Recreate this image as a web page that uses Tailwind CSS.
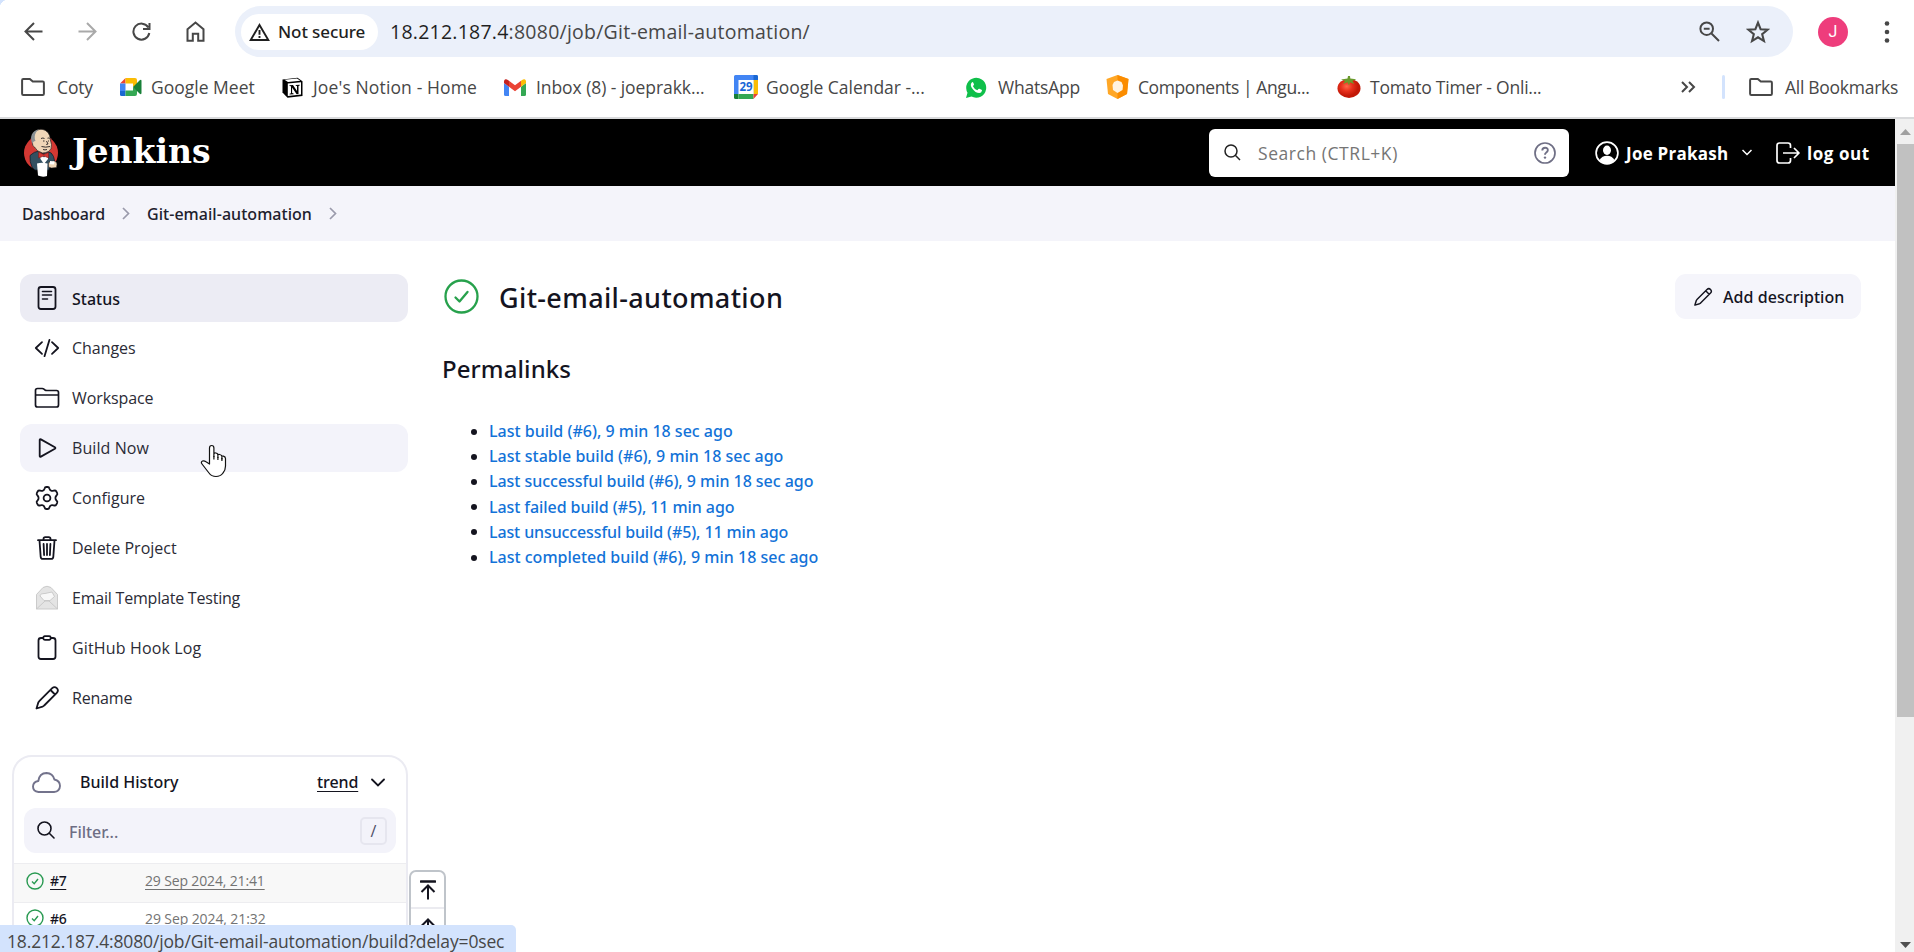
<!DOCTYPE html>
<html lang="en">
<head>
<meta charset="utf-8">
<title>Git-email-automation [Jenkins]</title>
<script src="https://cdn.jsdelivr.net/npm/@tailwindcss/browser@4"></script>
</head>
<body class="relative flex h-[952px] w-[1914px] flex-col overflow-hidden bg-white font-['Open_Sans','Noto_Sans',sans-serif] text-[#14141f] whitespace-nowrap">

<!-- Browser toolbar -->
<div class="flex h-[63px] shrink-0 items-center bg-[radial-gradient(circle_at_8px_8px,#fff_8px,#d3e3fd_8.5px)] bg-[length:8px_8px] bg-no-repeat">
  <div class="flex w-[235px] items-center gap-[35px] pl-[24px]">
    <svg class="size-[19px]" viewBox="0 0 19 19" fill="none" stroke="#474747" stroke-width="2"><path d="M18.500 9.500H1.500M10 1L1.500 9.500 10 18"/></svg>
    <svg class="size-[19px]" viewBox="0 0 19 19" fill="none" stroke="#a9a9a9" stroke-width="2"><path d="M.5 9.500h17M9 1l8.500 8.500L9 18"/></svg>
    <svg class="size-[19px]" viewBox="0 0 19 19" fill="none" stroke="#474747" stroke-width="2"><path d="M16.300 5.500A8 8 0 1 0 17.300 11M17.500 1v6h-6.500"/></svg>
    <svg class="-mt-px h-[21px] w-[19px]" viewBox="0 0 19 21" fill="none" stroke="#474747" stroke-width="2"><path d="M1.500 8.200L9.500 1.600l8 6.600v11.600h-5.300v-7H6.800v7H1.500z"/></svg>
  </div>
  <div class="flex h-[51px] w-[1558px] items-center rounded-full bg-[#ebf0fa] pl-[6px]">
    <div class="flex h-[36px] w-[137px] items-center rounded-full bg-white pl-[8px]">
      <svg class="h-[18px] w-[21px]" viewBox="0 0 21 18" fill="none" stroke="#1f1f1f" stroke-width="1.900"><path d="M10.500 2L19.300 17H1.700z"/><path d="M10.500 7v4.800M10.500 13v2"/></svg>
      <span class="ml-[8px] font-['Noto_Sans'] text-[17px] font-medium tracking-[-0.1px] text-[#1f1f1f]">Not secure</span>
    </div>
    <span class="ml-[12px] w-[1309px] text-[19.500px] tracking-[0.24px] text-[#474747]"><span class="text-[#1f1f1f]">18.212.187.4</span>:8080/job/Git-email-automation/</span>
    <svg class="h-[21px] w-[21px]" viewBox="0 0 21 21" fill="none" stroke="#474747" stroke-width="2"><circle cx="7.700" cy="7.700" r="6.300"/><path d="M12.500 12.500l7.500 7.500M4.800 7.700h5.800"/></svg>
    <svg class="ml-[26px] size-[24px]" viewBox="0 0 23 23" fill="none" stroke="#474747" stroke-width="2"><path d="M11.500 2.500l2.500 6.300 6.700.5-5.200 4.300 1.700 6.600-5.700-3.600-5.700 3.600 1.700-6.600-5.200-4.300 6.700-.5z"/></svg>
  </div>
  <div class="ml-[25px] flex size-[30px] items-center justify-center rounded-full bg-[#ee3d7c] font-['Roboto'] text-[16px] text-white">J</div>
  <svg class="ml-[36px] h-[22px] w-[6px]" viewBox="0 0 6 22" fill="#474747"><circle cx="3" cy="2.500" r="2.300"/><circle cx="3" cy="11" r="2.300"/><circle cx="3" cy="19.500" r="2.300"/></svg>
</div>

<!-- Bookmarks bar -->
<div class="flex h-[56px] shrink-0 items-start border-b-2 border-[#d9dadc] text-[17.500px] text-[#474747]">
  <div class="flex h-[48px] w-full items-center">
    <div class="flex w-[120px] items-center gap-[12px] pl-[21px]">
      <svg class="h-[18px] w-[24px]" viewBox="0 0 24 18" fill="none" stroke="#474747" stroke-width="2"><path d="M1.100 2.200q0-1.200 1.200-1.200h6.500l3 2.600h9.900q1.200 0 1.200 1.200v11q0 1.200-1.200 1.200H2.300q-1.200 0-1.200-1.200z"/></svg>
      <span class="tracking-[-0.14px]">Coty</span>
    </div>
    <div class="flex w-[162px] items-center gap-[9px]">
      <svg class="h-[18px] w-[22px]" viewBox="0 0 22 18"><path fill="#ea4335" d="M0 5.500L5.500 0v5.500z"/><path fill="#fbbc04" d="M5.500 0H15q2 0 2 2v5l-4 2V5.500H5.500z"/><path fill="#4285f4" d="M0 5.500h5.500v7.500H0z"/><path fill="#1967d2" d="M0 13h5.500v5H1.500Q0 18 0 16.500z"/><path fill="#34a853" d="M5.500 12.500H13V9l4 2.500V16q0 2-2 2H5.500z"/><path fill="#188038" d="M13 9l6.500-6.500Q21.500 1 21.500 3v12q0 2-2 .5z"/></svg>
      <span>Google Meet</span>
    </div>
    <div class="flex w-[222px] items-center gap-[10px]">
      <svg class="h-[21px] w-[21px]" viewBox="0 0 21 21"><path fill="#000" d="M.5 2.500L15.500.8l5 3.500V19L5.500 20.800.5 15.500z"/><path fill="#fff" d="M2.500 2.800l12.500-1.300 3.300 2.300L6 5zM5.800 6.500l13.200-1.200v12.300L5.800 19z"/><path fill="#000" d="M7.500 8.200l3.500-.2 4 6v-5l-1.300-.3V8l4-.3v.9l-1.200.3v8.200l-1.900.2-4.500-6.700v5.500l1.500.3v.8l-4 .3v-.8l1.400-.5V9.300L7.500 9z"/></svg>
      <span class="tracking-[0.13px]">Joe's Notion - Home</span>
    </div>
    <div class="flex w-[230px] items-center gap-[10px]">
      <svg class="h-[17px] w-[22px]" viewBox="0 0 22 17"><path fill="#4285f4" d="M0 4l5 3.700V17H1.500Q0 17 0 15.500z"/><path fill="#34a853" d="M22 4l-5 3.700V17h3.500q1.500 0 1.500-1.500z"/><path fill="#c5221f" d="M0 2.500Q0 .5 1.500.2 3-.2 5 1.700v6L0 4z"/><path fill="#fbbc04" d="M22 2.500q0-2-1.500-2.300Q19-.2 17 1.700v6L22 4z"/><path fill="#ea4335" d="M5 1.700l6 4.600 6-4.600v6l-6 4.600-6-4.600z"/></svg>
      <span class="tracking-[-0.07px]">Inbox (8) - joeprakk...</span>
    </div>
    <div class="flex w-[232px] items-center gap-[8px]">
      <svg class="h-[24px] w-[24px]" viewBox="0 0 24 24"><path fill="#4285f4" d="M0 1.500Q0 0 1.500 0h21Q24 0 24 1.500V5H19.500v14H0z"/><path fill="#1967d2" d="M19.500 0h3Q24 0 24 1.500V5h-4.500z"/><path fill="#fbbc04" d="M19.500 5H24v14h-4.500z"/><path fill="#188038" d="M0 19h4.500v5h-3Q0 24 0 22.500z"/><path fill="#34a853" d="M4.500 19h15v5h-15z"/><path fill="#ea4335" d="M19.500 19H24l-4.500 5z"/><path fill="#fff" d="M4.500 5h15v14h-15z"/><text x="12" y="16.200" text-anchor="middle" font-family="Open Sans" font-weight="700" font-size="11.500" fill="#1a66d6">29</text></svg>
      <span class="tracking-[-0.03px]">Google Calendar -...</span>
    </div>
    <div class="flex w-[140px] items-center gap-[11px]">
      <svg class="size-[21px]" viewBox="0 0 21 21"><path fill="#0fbf4a" d="M0 21l1.500-5.300A10 10 0 1 1 5.500 19.600z"/><path fill="#fff" d="M7 5.200q-.7-.3-1.400.5-1.800 2.300.5 5.500 3.300 4.800 7.200 4.900 2.200-.2 2.700-2.700 0-.5-.5-.7l-2.100-1q-.6-.2-1 .3l-.8 1q-.3.300-.8 0-2.600-1.200-3.700-3.500-.1-.4.1-.7.900-.9.800-1.500z"/></svg>
      <span class="tracking-[-0.21px]">WhatsApp</span>
    </div>
    <div class="flex w-[231px] items-center gap-[9px]">
      <svg class="h-[24px] w-[23px]" viewBox="0 0 23 24"><path fill="#ffa726" d="M11.500 0L22.500 4 21 19l-9.500 5L2 19 .5 4z"/><path fill="#fb8c00" d="M11.500 0L22.500 4 21 19l-9.500 5z"/><path fill="#fff3e0" d="M11.500 5.500l4 1.500 1.500 3.500-.5 4.500-5 3-4.500-3L6.500 10 8 7z"/></svg>
      <span class="tracking-[-0.4px]">Components | Angu...</span>
    </div>
    <div class="flex w-[344px] items-center gap-[9px]">
      <svg class="h-[22px] w-[24px]" viewBox="0 0 24 22"><defs><radialGradient id="tom" cx=".4" cy=".4"><stop offset="0" stop-color="#ff6a4a"/><stop offset=".5" stop-color="#e8301c"/><stop offset="1" stop-color="#c21807"/></radialGradient></defs><ellipse cx="12" cy="12.300" rx="11.500" ry="9.600" fill="url(#tom)"/><path fill="#6a9a2d" d="M11 0h2l.3 2.500 6 .8-4 1.700 2 3-4.300-1.700L12 9.500l-1.500-3.200L6 8l2-3-4-1.500 6.500-1z"/></svg>
      <span class="tracking-[-0.22px]">Tomato Timer - Onli...</span>
    </div>
    <svg class="h-[12px] w-[15px]" viewBox="0 0 15 12" fill="none" stroke="#474747" stroke-width="2"><path d="M1 1l5 5-5 5M8 1l5 5-5 5"/></svg>
    <div class="ml-[26px] h-[24px] w-[3px] rounded bg-[#d3e3fd]"></div>
    <svg class="ml-[24px] h-[18px] w-[24px]" viewBox="0 0 24 18" fill="none" stroke="#474747" stroke-width="2"><path d="M1.100 2.200q0-1.200 1.200-1.200h6.500l3 2.600h9.900q1.200 0 1.200 1.200v11q0 1.200-1.200 1.200H2.300q-1.200 0-1.200-1.200z"/></svg>
    <span class="ml-[12px] tracking-[-0.28px]">All Bookmarks</span>
  </div>
</div>

<!-- Page viewport -->
<div class="flex min-h-0 flex-1">
  <div class="flex w-[1895px] flex-col">
    <header class="flex h-[67px] shrink-0 items-center bg-black text-white">
      <svg class="ml-[23px] h-[49px] w-[36px]" viewBox="0 0 36 49">
        <ellipse cx="18" cy="25" rx="17" ry="17.500" fill="#d33833"/>
        <path fill="#335061" stroke="#0b1b25" stroke-width=".7" d="M7 27.500q4-4 9-4.500l4 3 4-2.500q5 .5 6.500 5l1.500 6-5 2.500-1 5H12l-3-3q-2.500-5-2-11.500z"/>
        <path fill="#f0d6b7" stroke="#231f20" stroke-width=".7" d="M9.500 15Q8 5 14 2.200 20-.5 25 4.500q2 2.500 2.300 7l1.200 5q.5 5-3 7-3 1.500-6 1.500-6-1.500-8-6-2.500-1-2-4z"/>
        <path fill="#8a9094" d="M9.500 16Q7 11 8.800 6.500 11 2 16 1.200q-4 3-4.300 7.300-.2 2 .8 4.500-2.500 0-3 3z"/>
        <path fill="none" stroke="#231f20" stroke-width=".9" d="M18 10.500q2-1 3.500 0M24.500 10.200q1.500-.5 2 .3M20 13h1.500M25 13h1M23.500 13l1.500 3-1.800.5M18.500 18.500q4 1.300 8.500 0M20 21.500q2 .8 4 0"/>
        <path fill="#fff" d="M16.500 24.500l4.500 5 4-4.500v6l-4 5-3.500-5z"/>
        <path fill="#d33833" stroke="#7a1512" stroke-width=".5" d="M15.500 24l5 2.500 5-2v5.500l-4.500-2-5.500 2z"/>
        <path fill="#fff" d="M14 35.500q5-1.500 10.500 0l-.5 12.500q-4.500 1.500-9-.5z"/>
        <path fill="#f0d6b7" stroke="#231f20" stroke-width=".5" d="M25.500 34.500l5-1.500q3 0 3.500 3l-.5 3.500-5 .5-3-1z"/>
        <path fill="#fff" d="M27 33l4.500.5-.5 3-4-.3z"/>
      </svg>
      <span class="-mt-[2px] ml-[13px] w-[1137px] font-['DejaVu_Serif'] text-[33px] leading-none font-bold">Jenkins</span>
      <div class="flex h-[48px] w-[360px] items-center rounded-[6px] bg-white pl-[15px]">
        <svg class="size-[17px]" viewBox="0 0 17 17" fill="none" stroke="#222" stroke-width="1.500"><circle cx="7" cy="7" r="6"/><path d="M11.300 11.300L16 16"/></svg>
        <span class="mt-[2px] ml-[17px] w-[276px] text-[17.500px] tracking-[0.55px] text-[#757575]">Search (CTRL+K)</span>
        <svg class="size-[22px]" viewBox="0 0 22 22" fill="none" stroke="#6f6f85" stroke-width="1.700"><circle cx="11" cy="11" r="10"/><path d="M8.300 8.600q0-2.800 2.800-2.800t2.700 2.500q0 1.500-1.700 2.400-1.100.7-1.100 2.100" stroke-width="1.900"/><circle cx="11" cy="15.600" r="1.200" fill="#6f6f85" stroke="none"/></svg>
      </div>
      <svg class="ml-[26px] size-[24px]" viewBox="0 0 24 24"><circle cx="12" cy="12" r="10.900" fill="none" stroke="#fff" stroke-width="1.700"/><ellipse cx="12" cy="9.200" rx="4" ry="4.700" fill="#fff"/><path fill="#fff" d="M4.500 19q2.500-4.300 7.500-4.300t7.500 4.300Q16 23 12 23t-7.500-4z"/></svg>
      <span class="mt-[2px] ml-[7px] w-[116px] text-[17px] font-bold tracking-[0.25px]">Joe Prakash</span>
      <svg class="h-[7px] w-[10px]" viewBox="0 0 10 7" fill="none" stroke="#fff" stroke-width="1.500"><path d="M.5 1L5 5.500 9.500 1"/></svg>
      <svg class="ml-[24px] h-[22px] w-[24px]" viewBox="0 0 24 22" fill="none" stroke="#fff" stroke-width="1.700" stroke-linejoin="round"><path d="M14.500 6V3.500q0-2.500-2.500-2.500H3.500Q1 1 1 3.500v15Q1 21 3.500 21H12q2.500 0 2.500-2.500V16M7 11h16M18 6l5 5-5 5"/></svg>
      <span class="mt-[2px] ml-[7px] text-[17px] font-bold tracking-[0.55px]">log out</span>
    </header>

    <nav class="flex h-[55px] shrink-0 items-center bg-[#f4f4fa] pl-[22px] font-['Noto_Sans'] text-[16px] font-medium text-[#20202c]">
      <span class="w-[100px] tracking-[-0.1px]">Dashboard</span>
      <svg class="h-[13px] w-[8px]" viewBox="0 0 8 13" fill="none" stroke="#9a9aab" stroke-width="1.700"><path d="M1 1l5.500 5.500L1 12"/></svg>
      <span class="ml-[17px] w-[182px] tracking-[0.04px]">Git-email-automation</span>
      <svg class="h-[13px] w-[8px]" viewBox="0 0 8 13" fill="none" stroke="#9a9aab" stroke-width="1.700"><path d="M1 1l5.500 5.500L1 12"/></svg>
    </nav>

    <div class="flex min-h-0 flex-1 overflow-hidden">
      <aside class="flex w-[442px] shrink-0 flex-col pt-[33px] text-[16px] text-[#2b2b36]">
        <div class="ml-[20px] flex w-[388px] flex-col gap-[2px]">
          <a class="flex h-[48px] items-center gap-[12px] rounded-[12px] bg-[#ececf4] pl-[14px] font-['Noto_Sans'] font-medium text-[#14141f]">
            <svg class="size-[26px]" viewBox="0 0 26 26" fill="none" stroke="currentColor" stroke-width="1.800" stroke-linecap="round"><rect x="4.500" y="2" width="17" height="22" rx="2.500"/><path d="M8.500 6.500h9M8.500 10h9M8.500 14h5" stroke-width="1.600"/></svg>
            <span class="mt-[2px]">Status</span></a>
          <a class="flex h-[48px] items-center gap-[12px] pl-[14px]">
            <svg class="size-[26px]" viewBox="0 0 26 26" fill="none" stroke="#14141f" stroke-width="1.800" stroke-linecap="round" stroke-linejoin="round"><path d="M8 7.200L1.800 13 8 18.800M18 7.200l6.200 5.800-6.200 5.800M15.500 4.800l-5 16.400"/></svg>
            <span class="tracking-[-0.05px]">Changes</span></a>
          <a class="flex h-[48px] items-center gap-[12px] pl-[14px]">
            <svg class="size-[26px]" viewBox="0 0 26 26" fill="none" stroke="#14141f" stroke-width="1.700" stroke-linejoin="round"><path d="M1.500 5.500q0-2 2-2h4.700q1 0 1.800.7l1 .8q.7.500 1.700.5h9.800q2 0 2 2v12.500q0 2-2 2h-19q-2 0-2-2zM1.500 10h23"/></svg>
            <span class="tracking-[-0.1px]">Workspace</span></a>
          <a class="flex h-[48px] items-center gap-[12px] rounded-[12px] bg-[#f3f3fa] pl-[14px]">
            <svg class="size-[26px]" viewBox="0 0 26 26" fill="none" stroke="#14141f" stroke-width="1.800" stroke-linejoin="round"><path d="M5.700 5v16q0 1.200 1.200.6l14-7.800q1-.8 0-1.500l-14-7.900q-1.200-.6-1.200.6z"/></svg>
            <span class="tracking-[0.08px]">Build Now</span></a>
          <a class="flex h-[48px] items-center gap-[12px] pl-[14px]">
            <svg class="size-[26px]" viewBox="0 0 26 26" fill="none" stroke="#14141f" stroke-width="1.800" stroke-linejoin="round"><circle cx="13" cy="13" r="3.400"/><path d="M10.600 3.500Q10.900 2 12.300 2h1.400q1.400 0 1.700 1.500.4 1.700 1.700 2.200 1 .5 2.500 0 1.900-.6 2.600.6l1 1.800q.6 1.200-.7 2.400-1.100 1.100-1.100 2.500t1.100 2.500q1.300 1.200.7 2.400l-1 1.800q-.7 1.200-2.600.6-1.500-.5-2.500 0-1.300.5-1.700 2.200-.3 1.500-1.700 1.500h-1.400q-1.400 0-1.700-1.500-.4-1.700-1.700-2.200-1-.5-2.500 0-1.900.6-2.600-.6l-1-1.800q-.6-1.200.7-2.400 1.100-1.100 1.100-2.500T3.500 10.500Q2.200 9.300 2.800 8.100l1-1.800q.7-1.200 2.600-.6 1.500.5 2.500 0 1.300-.5 1.700-2.200z"/></svg>
            <span>Configure</span></a>
          <a class="flex h-[48px] items-center gap-[12px] pl-[14px]">
            <svg class="size-[26px]" viewBox="0 0 26 26" fill="none" stroke="#14141f" stroke-width="1.800" stroke-linecap="round" stroke-linejoin="round"><path d="M4 5.200h18M5.500 5.500l1.200 16.400q.2 2 2 2h8.600q1.800 0 2-2L20.500 5.500M9.500 5V4q0-1.800 1.800-1.800h3.400q1.800 0 1.800 1.800v1M9.600 9l.5 11M13 9v11M16.400 9l-.5 11"/></svg>
            <span>Delete Project</span></a>
          <a class="flex h-[48px] items-center gap-[12px] pl-[14px]">
            <svg class="size-[26px]" viewBox="0 0 26 26" fill="#e4e4e4" stroke="#c6c6c6" stroke-width=".9" stroke-linejoin="round"><path d="M2.500 9.500L9 2.500q4-2.500 8 0l6.500 7V24h-21z"/><path fill="#f8f8f8" d="M6 11q0-2.500 5-2.500l7-1.500 2.500 4.500-4.500 4h-6z"/><path fill="none" d="M2.500 24l8.500-8h4l8.500 8"/></svg>
            <span class="tracking-[-0.21px]">Email Template Testing</span></a>
          <a class="flex h-[48px] items-center gap-[12px] pl-[14px]">
            <svg class="size-[26px]" viewBox="0 0 26 26" fill="none" stroke="#14141f" stroke-width="1.800" stroke-linejoin="round"><path d="M9.500 3H7Q4.500 3 4.500 5.500v16Q4.500 24 7 24h12q2.500 0 2.500-2.500v-16Q21.500 3 19 3h-2.500"/><rect x="9.300" y="1.200" width="7.400" height="3.600" rx="1.500"/></svg>
            <span class="tracking-[0.15px]">GitHub Hook Log</span></a>
          <a class="flex h-[48px] items-center gap-[12px] pl-[14px]">
            <svg class="size-[26px]" viewBox="0 0 26 26" fill="none" stroke="#14141f" stroke-width="1.800" stroke-linejoin="round"><path d="M22.800 3.200q-2.300-2.200-4.600 0L5.500 15.800Q4.800 16.500 4.300 17.500L2.500 23.500l6-1.800q1-.4 1.700-1.200L22.800 7.800q2.200-2.300 0-4.600zM16.500 5l4.500 4.500"/></svg>
            <span class="tracking-[-0.2px]">Rename</span></a>
        </div>

        <!-- Build history -->
        <div class="mt-[33px] ml-[12px] h-[240px] w-[396px] shrink-0 overflow-hidden rounded-t-[20px] border-2 border-[#ebebf2]">
          <div class="flex h-[51px] items-center pl-[18px] font-['Noto_Sans'] font-medium text-[#14141f]">
            <svg class="h-[21px] w-[29px]" viewBox="0 0 29 21" fill="none" stroke="#73738c" stroke-width="1.900" stroke-linejoin="round"><path d="M6.500 20Q1 19.500 1 14.500 1.200 9.800 6.300 9 7.500 1 14.500 1q6.300.2 7.900 6.500Q28 8.800 28 14q-.3 5.500-6 6z"/></svg>
            <span class="-mt-[2px] ml-[19px] w-[237px]">Build History</span>
            <span class="-mt-[2px] w-[54px] tracking-[-0.1px] underline decoration-1 underline-offset-[3px]">trend</span>
            <svg class="h-[9px] w-[14px]" viewBox="0 0 14 9" fill="none" stroke="#14141f" stroke-width="1.800" stroke-linecap="round"><path d="M1 1.500l6 6 6-6"/></svg>
          </div>
          <div class="ml-[10px] flex h-[45px] w-[372px] items-center rounded-[12px] bg-[#f3f3fa] pl-[13px]">
            <svg class="-mt-[2px] size-[18px]" viewBox="0 0 18 18" fill="none" stroke="#14141f" stroke-width="1.600" stroke-linecap="round"><circle cx="7.500" cy="7.500" r="6.500"/><path d="M12.300 12.300L17 17"/></svg>
            <span class="mt-[2px] ml-[14px] w-[291px] font-['Noto_Sans'] font-medium tracking-[-0.05px] text-[#6d6d84]">Filter...</span>
            <span class="flex h-[28px] w-[27px] items-center justify-center rounded-[5px] border-2 border-[#e6e6ef] text-[16px] text-[#4d4d66]">/</span>
          </div>
          <div class="mt-[10px] flex h-[40px] items-center border-y border-[#ededf0] bg-[#f8f8f8] pb-[5px] pl-[12px] text-[14px]">
            <svg class="size-[18px]" viewBox="0 0 18 18" fill="none" stroke="#2a9a52" stroke-width="1.400"><circle cx="9" cy="9" r="8"/><path d="M6 9.500l2.200 2.200L12 7"/></svg>
            <span class="ml-[6px] w-[95px] font-['Noto_Sans'] font-medium text-[#14141f]"><span class="tracking-[-0.4px] underline underline-offset-[3px]">#7</span></span>
            <span class="tracking-[-0.15px] text-[#737373] underline underline-offset-[3px]">29 Sep 2024, 21:41</span>
          </div>
          <div class="flex h-[36px] items-center pb-[6px] pl-[12px] text-[14px]">
            <svg class="size-[18px]" viewBox="0 0 18 18" fill="none" stroke="#2a9a52" stroke-width="1.400"><circle cx="9" cy="9" r="8"/><path d="M6 9.500l2.200 2.200L12 7"/></svg>
            <span class="ml-[6px] w-[95px] font-['Noto_Sans'] font-medium tracking-[-0.4px] text-[#14141f]">#6</span>
            <span class="tracking-[-0.1px] text-[#737373]">29 Sep 2024, 21:32</span>
          </div>
        </div>
      </aside>

      <main class="w-[1453px] pt-[33px] font-['Noto_Sans'] font-medium">
        <div class="flex h-[45px] items-center">
          <svg class="ml-[2px] size-[35px]" viewBox="0 0 35 35" fill="none" stroke="#27a14c" stroke-width="2.300" stroke-linecap="round" stroke-linejoin="round"><circle cx="17.500" cy="17.500" r="16"/><path d="M11.500 18.500l4 4 8-9.500"/></svg>
          <h1 class="mt-[2px] ml-[20px] w-[1176px] text-[27px] leading-none tracking-[0.36px]">Git-email-automation</h1>
          <button class="flex h-[45px] w-[186px] items-center rounded-[11px] bg-[#f5f5fb] pl-[18px]">
            <svg class="size-[20px]" viewBox="0 0 26 26" fill="none" stroke="#14141f" stroke-width="1.900" stroke-linejoin="round"><path d="M22.800 3.200q-2.300-2.200-4.600 0L5.500 15.800Q4.800 16.500 4.300 17.500L2.500 23.500l6-1.800q1-.4 1.700-1.200L22.800 7.800q2.200-2.300 0-4.600zM16.500 5l4.500 4.500"/></svg>
            <span class="ml-[10px] text-[16px] tracking-[0.06px]">Add description</span>
          </button>
        </div>
        <h2 class="mt-[37px] text-[24px] leading-[26px] tracking-[0.1px]">Permalinks</h2>
        <ul class="mt-[37px] ml-[47px] list-none text-[16px] leading-[25.200px] text-[#1272d8]">
          <li class="flex items-center before:-ml-[18px] before:mr-[12px] before:size-[6px] before:rounded-full before:bg-[#14141f]">Last build (#6), 9 min 18 sec ago</li>
          <li class="flex items-center before:-ml-[18px] before:mr-[12px] before:size-[6px] before:rounded-full before:bg-[#14141f]">Last stable build (#6), 9 min 18 sec ago</li>
          <li class="flex items-center tracking-[-0.04px] before:-ml-[18px] before:mr-[12px] before:size-[6px] before:rounded-full before:bg-[#14141f]">Last successful build (#6), 9 min 18 sec ago</li>
          <li class="flex items-center tracking-[-0.08px] before:-ml-[18px] before:mr-[12px] before:size-[6px] before:rounded-full before:bg-[#14141f]">Last failed build (#5), 11 min ago</li>
          <li class="flex items-center tracking-[-0.12px] before:-ml-[18px] before:mr-[12px] before:size-[6px] before:rounded-full before:bg-[#14141f]">Last unsuccessful build (#5), 11 min ago</li>
          <li class="flex items-center before:-ml-[18px] before:mr-[12px] before:size-[6px] before:rounded-full before:bg-[#14141f]">Last completed build (#6), 9 min 18 sec ago</li>
        </ul>
      </main>
    </div>
  </div>

  <!-- Scrollbar -->
  <div class="flex w-[19px] flex-col items-end bg-[#f0f0f0]">
    <div class="flex h-[25px] w-[17px] items-center justify-center"><svg class="h-[6px] w-[11px]" viewBox="0 0 11 6" fill="#a0a0a0"><path d="M5.500 0L11 6H0z"/></svg></div>
    <div class="h-[573px] w-[17px] bg-[#c1c1c1]"></div>
    <div class="flex w-[17px] flex-1 items-end justify-center pb-[4px]"><svg class="h-[6px] w-[11px]" viewBox="0 0 11 6" fill="#505050"><path d="M5.500 6L11 0H0z"/></svg></div>
  </div>
</div>

<!-- Floating scroll buttons -->
<div class="absolute top-[870px] left-[409px] flex h-[90px] w-[37px] flex-col rounded-[7px] border-2 border-[#bfc4ca] bg-white">
  <div class="flex h-[37px] items-center justify-center border-b-2 border-[#ebebf0]"><svg class="h-[20px] w-[16px]" viewBox="0 0 16 20" fill="none" stroke="#14141f" stroke-width="2"><path d="M1 1.500h14" stroke-width="2.600" stroke-linecap="round"/><path d="M8 19.500V6M1.500 12L8 5.500l6.500 6.500"/></svg></div>
  <div class="flex justify-center pt-[9px]"><svg class="h-[16px] w-[16px]" viewBox="0 0 16 16" fill="none" stroke="#14141f" stroke-width="2"><path d="M8 15.500V2M1.500 8L8 1.500 14.500 8"/></svg></div>
</div>

<!-- Link status bubble -->
<div class="absolute top-[925px] left-0 flex h-[27px] w-[516px] items-center rounded-tr-[5px] bg-[#d3e3fd] pt-[6px] pl-[7px] text-[17.500px] tracking-[-0.15px] text-[#474747]">18.212.187.4:8080/job/Git-email-automation/build?delay=0sec</div>

<!-- Pointer -->
<svg class="absolute top-[444px] left-[200px] h-[34px] w-[27px]" viewBox="0 0 27 34" fill="#fff" stroke="#111" stroke-width="1.200" stroke-linejoin="round"><path d="M9.500 20V4q0-2.500 2.200-2.500T13.900 4v8.500V10q0-1.200 1.800-1 2.200.2 2.200 2v2.500V11q0-.8 1.800-.5 2.200.4 2.200 2V15v-2.500q0-.7 1.500-.4 2.100.6 2.100 2.400V22q0 4-2.500 7-2.600 3.500-7 3.500-4.500 0-7-3.500l-7-9q-1.500-2 .5-3 1.700-.6 3.500.8z"/><path fill="none" d="M13.900 12v3.500M17.900 13v3M21.900 14v3"/></svg>
</body>
</html>
